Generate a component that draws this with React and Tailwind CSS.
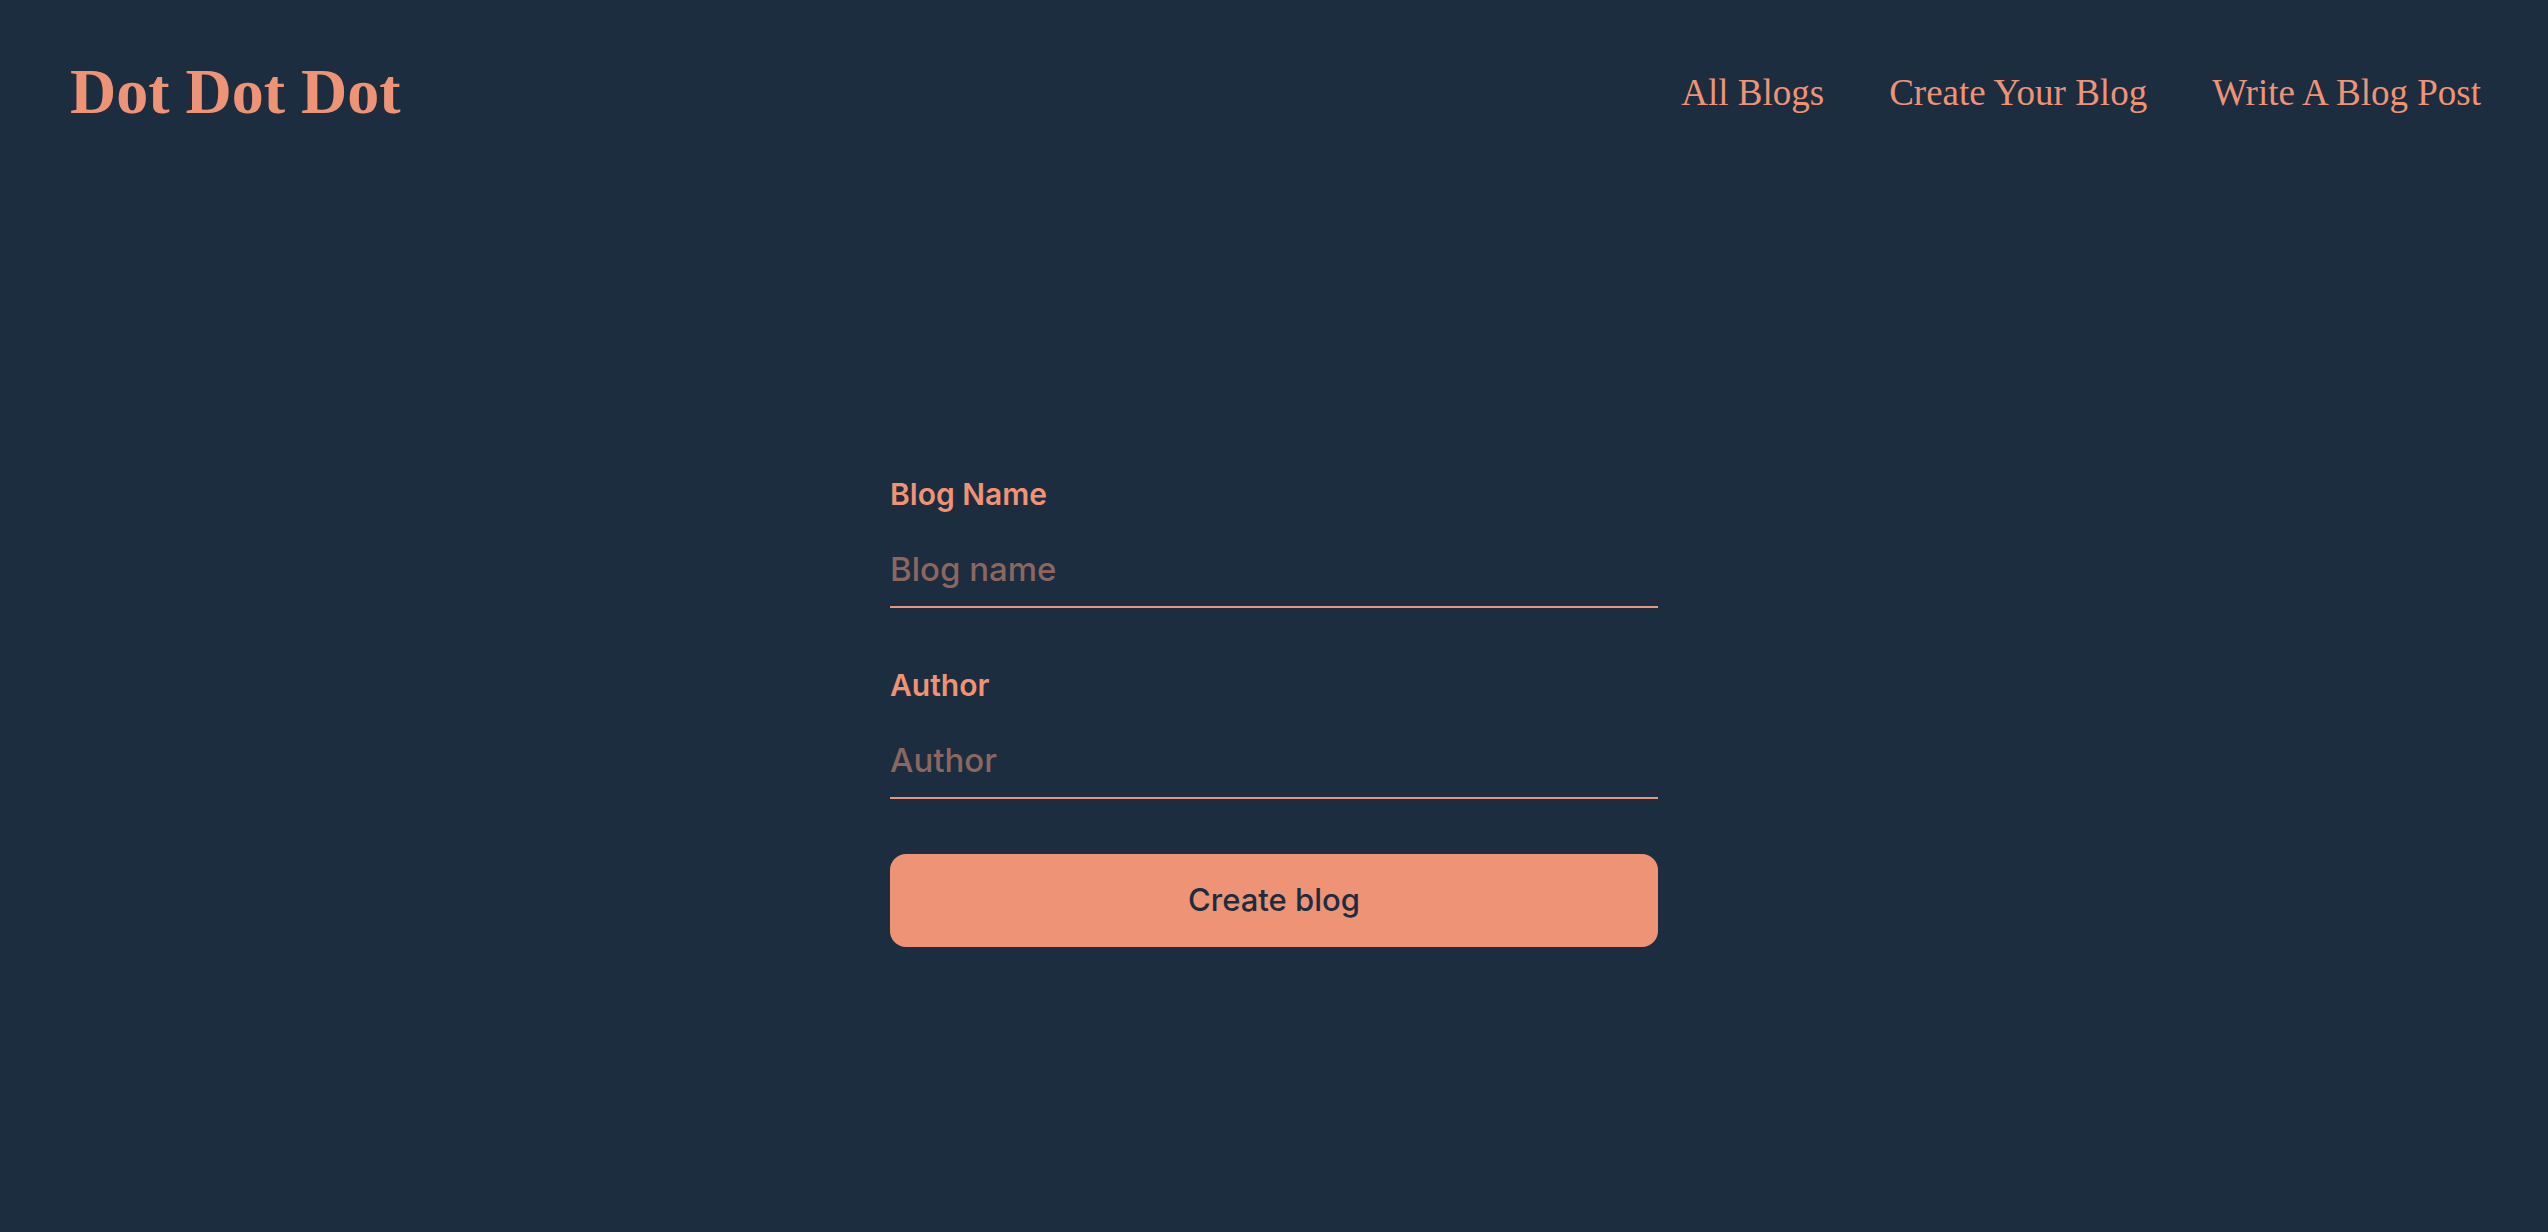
import React from "react";

const navLinks = ["All Blogs", "Create Your Blog", "Write A Blog Post"];

function Field({ label, placeholder }) {
  return (
    <div className="flex flex-col">
      <label className="text-[30px] leading-[44px] font-semibold text-[#ee9376]">{label}</label>
      <input
        type="text"
        placeholder={placeholder}
        className="h-[92px] pt-[29px] pb-[13px] bg-transparent outline-none border-b-2 border-[#ee9376] text-[33px] leading-[48px] font-medium text-[#ee9376] placeholder:text-[#8b675f]"
      />
    </div>
  );
}

export default function App() {
  return (
    <div className="min-h-screen bg-[#1b2d3f] font-['Inter',sans-serif]">
      {/* Header */}
      <header className="h-[184px] flex items-center justify-between pl-[70px] pr-[67px]">
        <h1 className="font-['Liberation_Serif',serif] text-[64px] leading-none font-bold text-[#ee9376]">
          Dot Dot Dot
        </h1>
        <nav className="flex items-center gap-[65px]">
          {navLinks.map((l) => (
            <a
              key={l}
              href="#"
              className="font-['Liberation_Serif',serif] text-[37px] leading-none text-[#ee9376]"
            >
              {l}
            </a>
          ))}
        </nav>
      </header>

      {/* Form */}
      <main className="pt-[288px]">
        <form className="w-[768px] mx-auto flex flex-col gap-[55px]" onSubmit={(e) => e.preventDefault()}>
          <Field label="Blog Name" placeholder="Blog name" />
          <Field label="Author" placeholder="Author" />
          <button
            type="submit"
            className="h-[93px] rounded-[16px] bg-[#ee9376] text-[#1b2d3f] text-[31px] font-medium cursor-pointer"
          >
            Create blog
          </button>
        </form>
      </main>
    </div>
  );
}
